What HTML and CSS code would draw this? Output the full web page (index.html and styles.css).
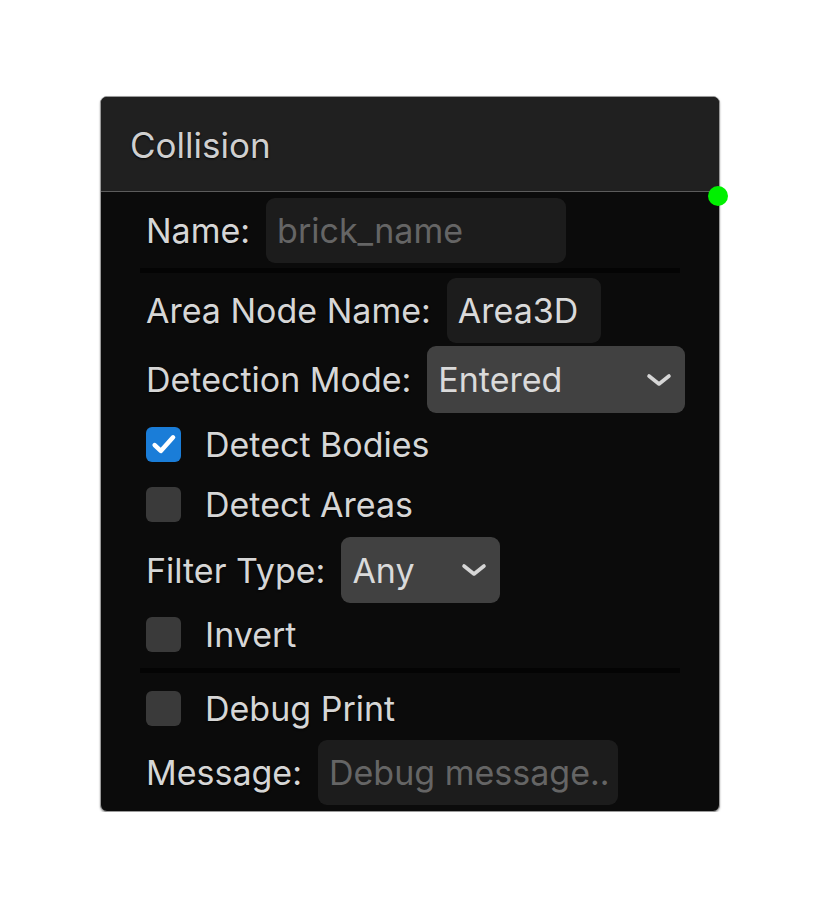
FILE: index.html
```html
<!DOCTYPE html>
<html>
<head>
<meta charset="utf-8">
<link rel="stylesheet" href="styles.css">
</head>
<body>
<div class="card">
  <div class="header"><span class="title">Collision</span></div>
  <span class="port"></span>
  <div class="body">
    <div class="row row-name">
      <span class="label">Name:</span>
      <div class="input w300"><span class="ph">brick_name</span></div>
    </div>
    <div class="sep"></div>
    <div class="row row-area">
      <span class="label">Area Node Name:</span>
      <div class="input w154"><span class="val">Area3D</span></div>
    </div>
    <div class="row row-mode">
      <span class="label">Detection Mode:</span>
      <div class="select w258"><span class="val">Entered</span>
        <svg class="chev" viewBox="0 0 26 14" width="26" height="14"><path d="M3 3 L13 11 L23 3" fill="none" stroke="#d6d6d6" stroke-width="3.6" stroke-linecap="round" stroke-linejoin="round"/></svg>
      </div>
    </div>
    <div class="row row-check c1">
      <span class="box checked"><svg viewBox="0 0 24 24" width="32" height="32"><path d="M5 12.8 L9.6 17.2 L18.8 7" fill="none" stroke="#fff" stroke-width="3.4" stroke-linecap="round" stroke-linejoin="round"/></svg></span>
      <span class="label">Detect Bodies</span>
    </div>
    <div class="row row-check c2">
      <span class="box"></span>
      <span class="label">Detect Areas</span>
    </div>
    <div class="row row-filter">
      <span class="label">Filter Type:</span>
      <div class="select w159"><span class="val">Any</span>
        <svg class="chev" viewBox="0 0 26 14" width="26" height="14"><path d="M3 3 L13 11 L23 3" fill="none" stroke="#d6d6d6" stroke-width="3.6" stroke-linecap="round" stroke-linejoin="round"/></svg>
      </div>
    </div>
    <div class="row row-check c3">
      <span class="box"></span>
      <span class="label">Invert</span>
    </div>
    <div class="sep sep2"></div>
    <div class="row row-check c4">
      <span class="box"></span>
      <span class="label">Debug Print</span>
    </div>
    <div class="row row-msg">
      <span class="label">Message:</span>
      <div class="input w300"><span class="ph">Debug message..</span></div>
    </div>
  </div>
</div>
</body>
</html>
```

FILE: styles.css
```css
html, body {
  margin: 0;
  padding: 0;
  background: #ffffff;
}
body {
  font-family: Inter, "Noto Sans", sans-serif;
  padding: 96px 0 0 100px;
}
.card {
  position: relative;
  width: 618px;
  background: #0b0b0b;
  border: 1px solid #9a9a9a;
  border-radius: 7px;
  box-shadow: 0 1px 2px rgba(0,0,0,0.35);
}
.header {
  height: 94px;
  background: #202020;
  border-bottom: 1px solid #5c5c5c;
  border-radius: 6px 6px 0 0;
  display: flex;
  align-items: center;
  padding-left: 29px;
}
.title {
  font-size: 35px;
  color: #cfcfcf;
  text-shadow: 0 1px 2px rgba(0,0,0,0.9);
  margin-top: 2px;
}
.port {
  position: absolute;
  right: -9px;
  top: 89px;
  width: 20px;
  height: 20px;
  border-radius: 50%;
  background: #00f000;
}
.body {
  padding: 6px 39px 6px 39px;
  border-radius: 0 0 6px 6px;
}
.row {
  display: flex;
  align-items: center;
  padding-left: 6px;
  gap: 16px;
}
.label {
  font-size: 34px;
  color: #d6d6d6;
  text-shadow: 0 1px 2px rgba(0,0,0,0.9);
  white-space: nowrap;
  flex: none;
}
.input, .select {
  box-sizing: border-box;
  display: flex;
  align-items: center;
  padding-left: 11px;
  border-radius: 9px;
  font-size: 34px;
  flex: none;
}
.input {
  height: 65px;
  background: #1c1c1c;
}
.select {
  height: 67px;
  background: #414141;
  justify-content: space-between;
  padding-right: 13px;
}
.row-filter .select { height: 66px; }
.w300 { width: 300px; }
.w154 { width: 154px; }
.w258 { width: 258px; }
.w159 { width: 159px; }
.ph { color: #656565; white-space: nowrap; }
.val { color: #dadada; white-space: nowrap; }
.chev { display: block; }
.sep {
  height: 5px;
  background: #040404;
  margin: 5px 0;
}
.sep2 { margin-top: 6px; }
.row-mode { margin-top: 3px; }
.row-check { gap: 24px; height: 60px; }
.c1 { margin-top: 1px; }
.row-filter { height: 72px; }
.c3 { height: 56px; }
.c4 { margin-top: 5px; }
.row-msg { margin-top: 2px; }
.box {
  width: 35px;
  height: 35px;
  border-radius: 6px;
  background: #3a3a3a;
  display: flex;
  align-items: center;
  justify-content: center;
  flex: none;
}
.box.checked { background: #1a7dd8; }
.box svg { display: block; }
```
